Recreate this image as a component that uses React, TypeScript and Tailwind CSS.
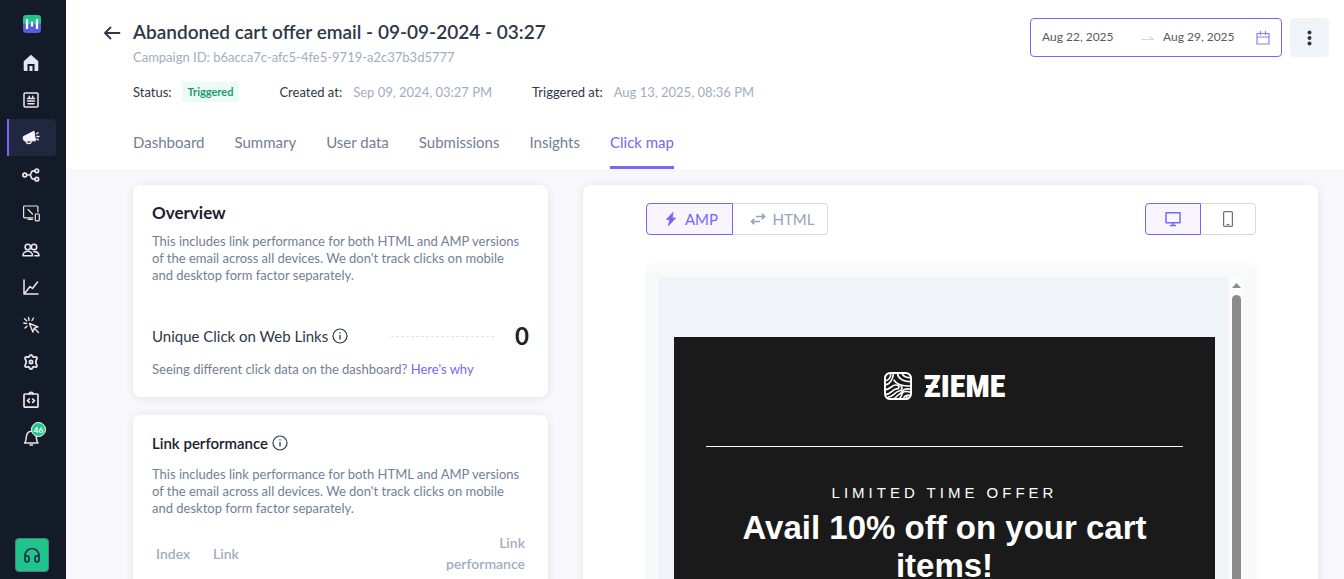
import type { ReactNode } from "react";

const description =
  "This includes link performance for both HTML and AMP versions of the email across all devices. We don't track clicks on mobile and desktop form factor separately.";

function Stroke({ children, size = 18, width = 1.5 }: { children: ReactNode; size?: number; width?: number }) {
  return (
    <svg
      width={size}
      height={size}
      viewBox="0 0 18 18"
      fill="none"
      stroke="currentColor"
      strokeWidth={width}
      strokeLinecap="round"
      strokeLinejoin="round"
      aria-hidden="true"
    >
      {children}
    </svg>
  );
}

const navItems: { label: string; active?: boolean; icon: ReactNode }[] = [
  {
    label: "Home",
    icon: (
      <svg width="18" height="18" viewBox="0 0 18 18" fill="currentColor" aria-hidden="true">
        <path d="M9 .8 1.700 7.200V16a1 1 0 0 0 1 1H5.500v-7h7v7h2.800a1 1 0 0 0 1-1V7.200Z" />
        <path d="M7.500 12h3v5h-3Z" />
      </svg>
    ),
  },
  {
    label: "Content",
    icon: (
      <Stroke>
        <rect x="2" y="2" width="14" height="14" rx="1" />
        <path d="M5.500 7.500h7M5.500 10h7M6 12.700h6M7.300 5.200v2M10.700 5.200v2" />
      </Stroke>
    ),
  },
  {
    label: "Campaigns",
    active: true,
    icon: (
      <svg width="18" height="18" viewBox="0 0 18 18" aria-hidden="true">
        <path d="M12 2.200 2 7.300a1.500 1.500 0 0 0-.8 2l.6 1.700a1.500 1.500 0 0 0 1.800 1l9.900-.2Z" fill="currentColor" stroke="currentColor" strokeLinejoin="round" />
        <path d="M4 12.500c.5 2.500 4.500 3 5.300.2M14.500 4.800l1.600-1M15 7.500h2M14.800 10l1.500.9" fill="none" stroke="currentColor" strokeWidth="1.300" strokeLinecap="round" />
      </svg>
    ),
  },
  {
    label: "Journeys",
    icon: (
      <Stroke width={1.7}>
        <circle cx="2.800" cy="9" r="1.900" />
        <circle cx="14.800" cy="4.800" r="1.800" />
        <circle cx="14.800" cy="13.200" r="1.800" />
        <path d="M4.800 9h3M12.800 4.800H11C8.500 4.800 9.500 9 7.800 9c1.700 0 .7 4.200 3.200 4.200h1.800" />
      </Stroke>
    ),
  },
  {
    label: "Web and app",
    icon: (
      <Stroke width={1.2}>
        <path d="M11 13.800H2.600a1 1 0 0 1-1-1V3a1 1 0 0 1 1-1h12.300a1 1 0 0 1 1 1v5M6 15.500h4.500M8 14v1.500M6 5.500l4.500 4.500" />
        <rect x="13.300" y="10" width="4" height="6.800" rx=".7" />
      </Stroke>
    ),
  },
  {
    label: "Audience",
    icon: (
      <Stroke width={1.6}>
        <circle cx="5.800" cy="6" r="2.700" />
        <circle cx="12" cy="6" r="2.700" />
        <path d="M1 14.800c0-6 9.500-6 9.500 0ZM12 10.600c2.800-.2 5 1.200 5 4.200h-4" />
      </Stroke>
    ),
  },
  {
    label: "Analytics",
    icon: (
      <Stroke>
        <path d="M2 2v14h14M3 15l5-6.500 2.500 2L15.500 4" />
      </Stroke>
    ),
  },
  {
    label: "Events",
    icon: (
      <Stroke width={1.4}>
        <path d="m7.500 7.500 8.500 3.300-3.800 1.400L10.800 16ZM12.500 12.500l4 4M6.500 1.500l.6 2.800M1.800 7l2.800.5M2.500 2.800l2.200 2M11.500 2 10 4.500M3 12l2-1.800" />
      </Stroke>
    ),
  },
  {
    label: "Settings",
    icon: (
      <Stroke width={1.8}>
        <path d="M9 1.800c1.500 0 1.300 1.800 2.400 2.300 1.100.5 2.500-.9 3.400.3.900 1.400-.8 2.200-.8 3.300v2.600c0 1.100 1.700 1.900.8 3.300-.9 1.200-2.300-.2-3.400.3-1.100.5-.9 2.300-2.400 2.300s-1.300-1.800-2.400-2.300c-1.100-.5-2.500.9-3.400-.3-.9-1.400.8-2.200.8-3.300V7.700c0-1.100-1.700-1.900-.8-3.300.9-1.200 2.300.2 3.400-.3C7.700 3.600 7.500 1.800 9 1.800Z" />
        <circle cx="9" cy="9" r="1.600" />
      </Stroke>
    ),
  },
  {
    label: "Developer",
    icon: (
      <Stroke width={1.7}>
        <rect x="2" y="3" width="14" height="13.200" rx="1" />
        <path d="M7 3a2 1.600 0 0 1 4 0M7.300 8 5.500 9.700l1.800 1.700M10.700 8l1.800 1.700-1.800 1.700" />
      </Stroke>
    ),
  },
  {
    label: "Notifications",
    icon: (
      <span className="relative block">
        <Stroke>
          <path d="M2.500 15c1.800-1.700 1.500-3.500 1.800-6C4.700 5 7 3.200 9.500 3.200S14 5 14.300 9c.2 2.500.2 4.300 1.700 6ZM8 17h2.500" />
        </Stroke>
        <span className="absolute -top-1.5 left-[9px] flex size-[15px] items-center justify-center rounded-full border border-white bg-[#20c58b] text-[8px] leading-none font-bold text-white">
          46
        </span>
      </span>
    ),
  },
];

function Sidebar() {
  return (
    <aside className="flex w-[66px] shrink-0 flex-col bg-[#141b28]">
      <a href="#home" aria-label="Workspace" className="mt-[15px] ml-[7px] flex w-[49px] justify-center">
        <svg width="18" height="18" viewBox="0 0 18 18" aria-hidden="true">
          <rect width="18" height="18" rx="3.500" fill="#5a5be0" />
          <path d="M0 9V3.500A3.500 3.500 0 0 1 3.500 0h11A3.500 3.500 0 0 1 18 3.500V9l-2.500-.8L13 9.500 9 8 5 9.500 2.500 8.200Z" fill="#20c58b" />
          <path d="M4 4v10M9 6.500v5M14 4v10" stroke="#fff" strokeWidth="2.300" />
        </svg>
      </a>
      <nav aria-label="Main" className="mt-[11px] mr-[10px] ml-[7px] flex h-[412px] flex-col">
        {navItems.map((item) => (
          <a
            key={item.label}
            href={"#" + item.label}
            aria-label={item.label}
            className={
              item.active
                ? "flex flex-1 items-center justify-center rounded-r border-l-2 border-[#7766f7] bg-[#222740] pr-1 text-[#f8f5ff]"
                : "flex flex-1 items-center justify-center pr-px text-[#e6e7ec]"
            }
          >
            {item.icon}
          </a>
        ))}
      </nav>
      <button
        type="button"
        aria-label="Support"
        className="mt-auto mb-[7px] ml-[15px] flex size-[34px] items-center justify-center rounded-sm border border-[#4f7f86] bg-[#20c58b] text-[#22304a]"
      >
        <Stroke width={1.7}>
          <path d="M2 12V9.500a7 7 0 0 1 14 0V12M2 11.500c0-2.500 4-2 4 0v2.500c0 2.400-4 2.400-4 0ZM16 11.500c0-2.500-4-2-4 0v2.500c0 2.400 4 2.400 4 0Z" />
        </Stroke>
      </button>
    </aside>
  );
}

const tabs = ["Dashboard", "Summary", "User data", "Submissions", "Insights", "Click map"];

function Header() {
  return (
    <header className="flex h-[169px] shrink-0 justify-between bg-white pr-[15px] pl-[37px]">
      <div className="flex gap-3">
        <button type="button" aria-label="Back" className="mt-6 size-[18px] text-[#2d3748]">
          <Stroke width={1.8}>
            <path d="M16.500 9h-14M7.500 3.500 2 9l5.500 5.500" />
          </Stroke>
        </button>
        <div className="flex flex-col">
          <h1 className="mt-5 text-[19px] leading-6 font-semibold text-[#2d3748]">
            Abandoned cart offer email - 09-09-2024 - 03:27
          </h1>
          <p className="mt-1 text-[13px] leading-[18px] text-[#a0aec0]">
            Campaign ID: b6acca7c-afc5-4fe5-9719-a2c37b3d5777
          </p>
          <dl className="mt-4 flex h-5 items-center text-[13px] leading-[18px] text-[#2d3748]">
            <dt>Status:</dt>
            <dd className="mr-10 ml-2.5 flex h-5 items-center bg-[#edfbf5] px-1.5 text-[11px] font-bold text-[#1d9a72]">
              Triggered
            </dd>
            <dt>Created at:</dt>
            <dd className="mr-10 ml-[11px] text-[#a0aec0]">Sep 09, 2024, 03:27 PM</dd>
            <dt>Triggered at:</dt>
            <dd className="ml-[11px] text-[#a0aec0]">Aug 13, 2025, 08:36 PM</dd>
          </dl>
          <nav aria-label="Campaign" className="mt-auto flex h-[52px] gap-[30px] text-[15px]">
            {tabs.map((tab) => (
              <a
                key={tab}
                href={"#" + tab}
                className={
                  tab === "Click map"
                    ? "border-b-3 border-[#7766f7] pt-3.5 text-[#7766f7]"
                    : "pt-3.5 text-[#718096]"
                }
              >
                {tab}
              </a>
            ))}
          </nav>
        </div>
      </div>
      <div className="mt-[18px] flex h-[39px] gap-2">
        <div className="flex w-[252px] items-center rounded-[4px] border border-[#7766f7] px-[11px] text-[12px] text-[#595959]">
          <input
            aria-label="Start date"
            defaultValue="Aug 22, 2025"
            className="w-[98px] bg-transparent pb-0.5 outline-none"
          />
          <svg width="14" height="14" viewBox="0 0 14 14" fill="none" stroke="#d5d5d5" aria-hidden="true">
            <path d="M1 8.500h12L9.500 5.500" strokeWidth="1.200" />
          </svg>
          <input
            aria-label="End date"
            defaultValue="Aug 29, 2025"
            className="ml-[9px] min-w-0 flex-1 bg-transparent pb-0.5 outline-none"
          />
          <svg width="14" height="14" viewBox="0 0 14 14" fill="none" stroke="#8c7ef8" aria-hidden="true">
            <path d="M1 2.500h12v10.500H1ZM1 6h12M4.500 0v4M9.500 0v4" strokeWidth="1.200" />
          </svg>
        </div>
        <button
          type="button"
          aria-label="More actions"
          className="flex w-[39px] items-center justify-center rounded-[4px] bg-[#f0f4f9] text-[#2d3748]"
        >
          <svg width="18" height="18" viewBox="0 0 18 18" fill="currentColor" aria-hidden="true">
            <circle cx="8.500" cy="3.500" r="2" />
            <circle cx="8.500" cy="9" r="2" />
            <circle cx="8.500" cy="14.500" r="2" />
          </svg>
        </button>
      </div>
    </header>
  );
}

function InfoIcon() {
  return (
    <svg width="16" height="16" viewBox="0 0 16 16" fill="none" stroke="#2d3748" aria-hidden="true">
      <circle cx="8" cy="8" r="7" strokeWidth="1.200" />
      <path d="M8 7v4.500M8 4.200v1.400" strokeWidth="1.300" />
    </svg>
  );
}

function Overview() {
  return (
    <section className="h-[212px] rounded-lg bg-white px-[19px] pt-[17px] shadow-[0_1px_8px_rgba(0,0,0,0.09)]">
      <h2 className="text-[17px] leading-[22px] font-bold text-[#1a202c]">Overview</h2>
      <p className="mt-[9px] pr-1 text-[13px] leading-[17px] text-[#718096]">{description}</p>
      <div className="mt-9 flex h-8 items-center">
        <h3 className="text-[15px] text-[#2d3748]">Unique Click on Web Links</h3>
        <span className="ml-1">
          <InfoIcon />
        </span>
        <span className="mr-[21px] ml-[43px] flex-1 border-t border-dashed border-[#e2e4ea]" />
        <strong className="text-2xl font-bold text-[#1a202c]">0</strong>
      </div>
      <p className="mt-2 text-[13px] leading-[18px] text-[#718096]">
        Seeing different click data on the dashboard?{" "}
        <a href="#why" className="text-[#7766f7]">
          Here's why
        </a>
      </p>
    </section>
  );
}

function LinkPerformance() {
  return (
    <section className="rounded-lg bg-white px-[19px] pt-[17px] pb-6 shadow-[0_1px_8px_rgba(0,0,0,0.09)]">
      <div className="flex h-[22px] items-center gap-1">
        <h2 className="text-[15px] font-semibold text-[#1a202c]">Link performance</h2>
        <InfoIcon />
      </div>
      <p className="mt-3 pr-1 text-[13px] leading-[17px] text-[#718096]">{description}</p>
      <table className="mt-[15px] w-full text-[14px] leading-[21px] text-[#a0aec0]">
        <thead>
          <tr>
            <th scope="col" className="w-[57px] pl-1 text-left font-semibold">Index</th>
            <th scope="col" className="pl-1 text-left font-semibold">Link</th>
            <th scope="col" className="w-[90px] pr-1 text-right font-semibold">Link performance</th>
          </tr>
        </thead>
      </table>
    </section>
  );
}

function ZiemeMark() {
  return (
    <svg width="28" height="28" viewBox="0 0 29 29" fill="none" stroke="#fff" aria-hidden="true">
      <rect x="1" y="1" width="27" height="27" rx="5.500" strokeWidth="2" />
      <path
        d="M1 9c4 0 6-3 6-8M1 13.500C7 13 9 8 10 1M14 1c0 5 5 9 14 9M18.500 1c1 3 4 5 9.500 5M10 8c3 5 8 6.500 18 6.500M1 18.500c5 0 7-5 11-5 5 0 4 4 1 4-4 0-6 6-12 6M4 26c5 0 7-5 11-6 4-1 5-5 2-5M9 28c3 0 4-4 7-5 3-2 3-7 12-5M15 28c3-1 3-4 4-6 1-2 5-2 9-1M20 28c1-4 3-4 8-4M23.500 28v-3.500"
        strokeWidth="1.700"
      />
    </svg>
  );
}

function ClickMap() {
  return (
    <section className="h-[700px] rounded-lg bg-white pt-[18px] pr-[62px] pl-[63px] shadow-[0_1px_8px_rgba(0,0,0,0.09)]">
      <div className="flex h-8 justify-between">
        <div className="flex text-[15px]">
          <button
            type="button"
            className="flex w-[87px] items-center justify-center gap-2 rounded-l-[4px] border border-[#7766f7] bg-[#f8f5ff] pl-1 text-[#7766f7]"
          >
            <svg width="12" height="16" viewBox="0 0 12 16" fill="currentColor" aria-hidden="true">
              <path d="M8 1.500 1.500 8.500H5l-1.500 6 7-7.500H7Z" stroke="currentColor" strokeLinejoin="round" />
            </svg>
            AMP
          </button>
          <button
            type="button"
            className="flex w-[95px] items-center justify-center gap-[7px] rounded-r-[4px] border border-l-0 border-[#d9d9d9] pl-1 text-[#94a3b8]"
          >
            <svg width="16" height="14" viewBox="0 0 16 14" fill="none" stroke="currentColor" strokeWidth="1.700" aria-hidden="true">
              <path d="M6 4.500h8M2 9.500h8M11.800 1.800l2.700 2.700-2.700 2.700M4.200 6.800 1.500 9.500l2.700 2.700" />
            </svg>
            HTML
          </button>
        </div>
        <div className="flex">
          <button
            type="button"
            aria-label="Desktop"
            className="flex w-14 items-center justify-center rounded-l-[4px] border border-[#7766f7] bg-[#f8f5ff] text-[#7766f7]"
          >
            <svg width="16" height="16" viewBox="0 0 16 16" fill="none" stroke="currentColor" strokeWidth="1.500" aria-hidden="true">
              <path d="M1 1.800h14v10H1ZM8 12v2.500M5 14.500h6" strokeLinejoin="round" />
            </svg>
          </button>
          <button
            type="button"
            aria-label="Mobile"
            className="flex w-[55px] items-center justify-center rounded-r-[4px] border border-l-0 border-[#d9d9d9] text-[#64748b]"
          >
            <svg width="10" height="16" viewBox="0 0 10 16" fill="none" stroke="currentColor" strokeWidth="1.200" aria-hidden="true">
              <rect x=".6" y=".6" width="8.800" height="14.800" rx="1" />
              <path d="M3.500 13.500h3" />
            </svg>
          </button>
        </div>
      </div>
      <div className="mt-[30px] bg-[#f8faf9] p-3 shadow-[0_0_8px_rgba(0,0,0,0.03)]">
        <div className="flex h-[600px] bg-[#f0f4f9]">
          <div className="min-w-0 flex-1 pt-[60px] pr-3.5 pl-4">
            <article className="h-full bg-[#1a1a1a] px-8 pt-[34px] text-center font-['Liberation_Sans',Arial,sans-serif] text-white">
              <div className="flex h-[29px] items-center justify-center gap-3">
                <ZiemeMark />
                <span className="relative font-['Liberation_Sans_Narrow','Roboto_Condensed','Open_Sans_Condensed',sans-serif] text-[32px] leading-none font-black">
                  ZIEME
                  <span className="absolute top-[15px] left-0.5 h-[3px] w-3 bg-white" />
                </span>
              </div>
              <hr className="mt-[46px] border-white" />
              <p className="mt-[35px] text-[15px] leading-[22px] tracking-[4px]">LIMITED TIME OFFER</p>
              <h2 className="mt-[5px] text-[33px] leading-[38px] font-bold">Avail 10% off on your cart items!</h2>
            </article>
          </div>
          <div className="flex w-[15px] flex-col items-center bg-[#fcfcfc] pt-1.5">
            <svg width="9" height="5" viewBox="0 0 9 5" fill="#8b8b8b" aria-hidden="true">
              <path d="M0 5 4.500 0 9 5Z" />
            </svg>
            <div className="mt-[7px] w-[9px] flex-1 rounded-full bg-[#8b8b8b]" />
          </div>
        </div>
      </div>
    </section>
  );
}

export default function App() {
  return (
    <div className="flex h-screen overflow-hidden bg-[#f7f7fc] font-['Lato',sans-serif]">
      <Sidebar />
      <div className="flex min-w-0 flex-1 flex-col">
        <Header />
        <main className="grid min-h-0 flex-1 grid-cols-[415fr_735fr] items-start gap-[35px] overflow-y-auto pt-4 pr-[26px] pl-[67px] [scrollbar-width:none]">
          <div className="flex flex-col gap-[18px]">
            <Overview />
            <LinkPerformance />
          </div>
          <ClickMap />
        </main>
      </div>
    </div>
  );
}
